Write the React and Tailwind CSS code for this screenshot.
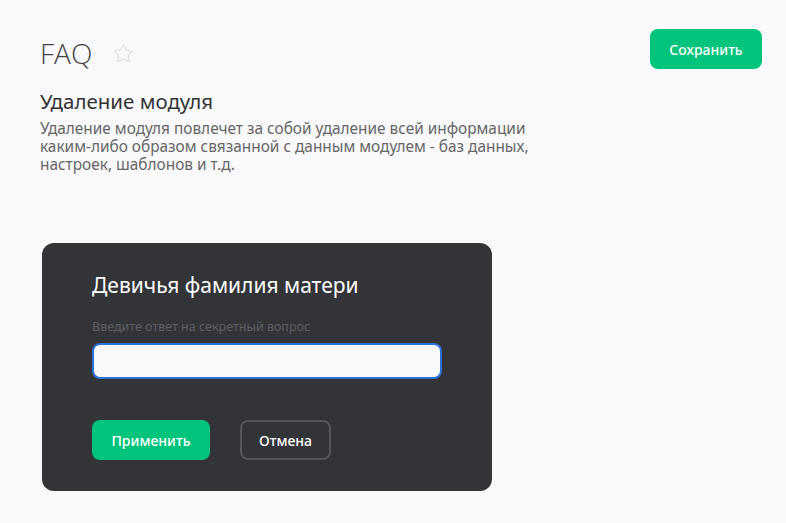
import { Star } from "lucide-react";

const descLines = [
  "Удаление модуля повлечет за собой удаление всей информации",
  "каким-либо образом связанной с данным модулем - баз данных,",
  "настроек, шаблонов и т.д.",
];

export default function App() {
  return (
    <div
      className="min-h-[523px] w-full bg-[#f9f9fb] pl-10 pr-6 pt-[29px] text-[#333]"
      style={{ fontFamily: '"Noto Sans", "Open Sans", sans-serif' }}
    >
      <div className="flex items-start justify-between">
        <div className="flex items-center gap-[21px] pt-[6px]">
          <h1
            className="text-[28px] font-light leading-[36px] text-[#444]"
            style={{ fontFamily: '"Open Sans", sans-serif' }}
          >
            FAQ
          </h1>
          <Star size={21} strokeWidth={1.5} className="text-[#dfe1e6]" />
        </div>
        <button className="h-10 w-[112px] rounded-lg bg-[#00c47c] text-[14px] font-medium text-white">
          Сохранить
        </button>
      </div>

      <h2 className="mt-[17px] text-[20.5px] leading-[26px] text-[#333]">Удаление модуля</h2>
      <div className="mt-[6px] flex w-[520px] flex-col text-[15.4px] text-[#666]">
        {descLines.map((line) => (
          <p key={line} className="h-[18px] leading-[18px]">
            {line}
          </p>
        ))}
      </div>

      <div className="ml-[2px] mt-[69px] h-[248px] w-[450px] rounded-xl bg-[#333438] px-[50px] pt-[28px]">
        <div className="text-[21px] leading-[28px] text-white">Девичья фамилия матери</div>
        <div className="mt-[20px] text-[12.5px] leading-[16px] text-[#5d5e63]">
          Введите ответ на секретный вопрос
        </div>
        <input className="mt-[8px] h-9 w-[350px] rounded-lg border-2 border-[#2a72d8] bg-[#f9f9fb] px-3 text-[14px] outline-none" />
        <div className="mt-[41px] flex gap-[30px]">
          <button className="h-10 w-[118px] rounded-lg bg-[#00c47c] text-[14px] font-medium text-white">
            Применить
          </button>
          <button className="h-10 w-[91px] rounded-lg border-2 border-[#55565b] text-[14px] font-medium text-white">
            Отмена
          </button>
        </div>
      </div>
    </div>
  );
}
